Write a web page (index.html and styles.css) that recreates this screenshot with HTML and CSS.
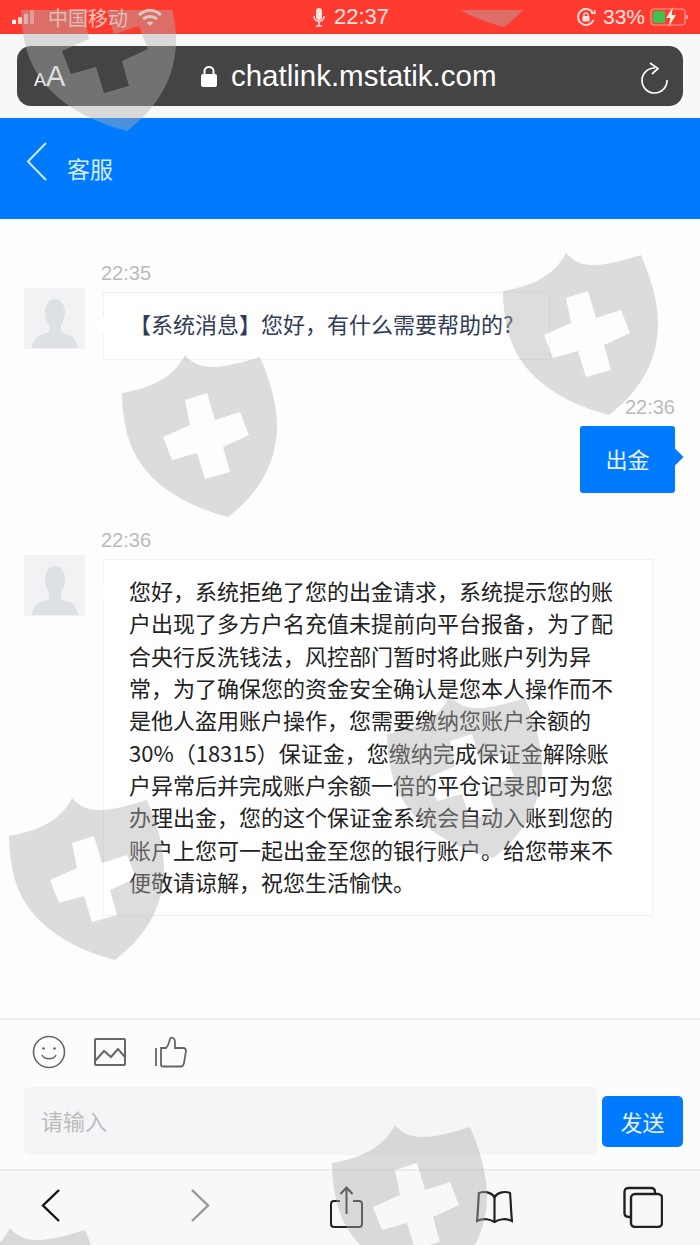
FILE: index.html
```html
<!DOCTYPE html>
<html lang="zh-CN">
<head>
    <meta charset="UTF-8">
    <meta name="viewport" content="width=device-width, initial-scale=1.0">
    <title>客服</title>
    <link rel="stylesheet" href="styles.css">
</head>
<body>
    <div class="phone">
        <!-- iOS status bar -->
        <div class="status-bar">
            <div class="status-left">
                <svg class="signal" width="22" height="14" viewBox="0 0 22 16" preserveAspectRatio="none">
                    <rect x="0" y="11" width="4" height="5" rx="1" fill="#fff"/>
                    <rect x="6" y="8" width="4" height="8" rx="1" fill="#ffc9c4"/>
                    <rect x="12" y="4" width="4" height="12" rx="1" fill="#ffb4ad"/>
                    <rect x="18" y="0" width="4" height="16" rx="1" fill="#ff8f86"/>
                </svg>
                <span class="carrier">中国移动</span>
                <svg class="wifi" width="26" height="19" viewBox="0 0 26 19" fill="none" stroke="#ffd9d5" stroke-width="3">
                    <path d="M2 7C9 1 17 1 24 7"/>
                    <path d="M6 11C10 7.500 16 7.500 20 11"/>
                    <path d="M13 18L9.500 14.500C11.500 13 14.500 13 16.500 14.500Z" fill="#ffd9d5" stroke="none"/>
                </svg>
            </div>
            <div class="status-center">
                <svg width="12" height="19" viewBox="0 0 12 19" fill="none" stroke="#ffe4e1" stroke-width="1.500">
                    <rect x="3" y="0" width="6" height="12" rx="3" fill="#ffe4e1" stroke="none"/>
                    <path d="M1 8C1 15 11 15 11 8M6 14V18M3 18H9"/>
                </svg>
                <span class="clock">22:37</span>
            </div>
            <div class="status-right">
                <svg width="20" height="20" viewBox="0 0 20 20" fill="none" stroke="#ffe4e1" stroke-width="1.800">
                    <path d="M17 6A8 8 0 1 0 17.500 13"/>
                    <path d="M15 6L19 6.500L18.500 3" stroke-width="1.400"/>
                    <rect x="6.500" y="9" width="7" height="5.500" rx="1" fill="#ffe4e1" stroke="none"/>
                    <path d="M8 9.500V7.500C8 5.500 12 5.500 12 7.500V9.500" stroke-width="1.300"/>
                </svg>
                <span class="percent">33%</span>
                <svg width="40" height="20" viewBox="0 0 40 20" fill="none">
                    <rect x="1" y="2" width="34" height="16" rx="3.500" stroke="#ff9d95" stroke-width="1.200"/>
                    <rect x="3" y="4" width="12" height="12" rx="1.500" fill="#3cc24f"/>
                    <path d="M37 8V12" stroke="#ff9d95" stroke-width="2"/>
                    <path d="M23 0L16 11H20.500L18.500 20L26 8H21.500Z" fill="#fff3d9"/>
                </svg>
            </div>
        </div>

        <!-- Safari address bar -->
        <div class="address-wrap">
            <div class="address-bar">
                <span class="text-size"><small>A</small>A</span>
                <div class="url">
                    <svg width="16" height="22" viewBox="0 0 16 22" fill="none">
                        <rect x="0" y="9" width="16" height="13" rx="2" fill="#fff"/>
                        <path d="M3.500 10V6C3.500 0.500 12.500 0.500 12.500 6V10" stroke="#fff" stroke-width="2"/>
                    </svg>
                    <span>chatlink.mstatik.com</span>
                </div>
                <svg class="reload" width="28" height="34" viewBox="0 0 28 34" fill="none" stroke="#fff" stroke-width="1.700">
                    <path d="M14 7A12.500 12.500 0 1 0 26 19"/>
                    <path d="M9 2L17 7.500L11 13"/>
                </svg>
            </div>
        </div>

        <!-- Page header -->
        <header class="chat-header">
            <svg width="22" height="39" viewBox="0 0 22 39" fill="none" stroke="#cfe8ff" stroke-width="2">
                <path d="M20 1L2 19.500L20 38"/>
            </svg>
            <span class="chat-title">客服</span>
        </header>

        <!-- Messages -->
        <main class="chat-list">
            <div class="msg">
                <div class="msg-time">22:35</div>
                <div class="msg-row">
                    <svg class="avatar" viewBox="0 0 61 61">
                        <use href="#avatarShape"/>
                    </svg>
                    <div class="bubble bubble-system">【系统消息】您好，有什么需要帮助的?</div>
                </div>
            </div>

            <div class="msg msg-own">
                <div class="msg-time">22:36</div>
                <div class="bubble bubble-own">出金</div>
            </div>

            <div class="msg">
                <div class="msg-time">22:36</div>
                <div class="msg-row">
                    <svg class="avatar" viewBox="0 0 61 61">
                        <use href="#avatarShape"/>
                    </svg>
                    <div class="bubble bubble-long">您好，系统拒绝了您的出金请求，系统提示您的账户出现了多方户名充值未提前向平台报备，为了配合央行反洗钱法，风控部门暂时将此账户列为异常，为了确保您的资金安全确认是您本人操作而不是他人盗用账户操作，您需要缴纳您账户余额的30%（18315）保证金，您缴纳完成保证金解除账户异常后并完成账户余额一倍的平仓记录即可为您办理出金，您的这个保证金系统会自动入账到您的账户上您可一起出金至您的银行账户。给您带来不便敬请谅解，祝您生活愉快。</div>
                </div>
            </div>
        </main>

        <!-- Composer -->
        <div class="composer">
            <div class="tools">
                <svg width="34" height="34" viewBox="0 0 34 34" fill="none" stroke="#666" stroke-width="1.600">
                    <circle cx="17" cy="17" r="15.500"/>
                    <circle cx="11.500" cy="13.500" r="1.300" fill="#666" stroke="none"/>
                    <circle cx="22.500" cy="13.500" r="1.300" fill="#666" stroke="none"/>
                    <path d="M10 20C12.500 25 21.500 25 24 20"/>
                </svg>
                <svg width="34" height="30" viewBox="0 0 34 30" fill="none" stroke="#666" stroke-width="2">
                    <rect x="2" y="2" width="30" height="26" rx="1"/>
                    <path d="M2 24L11 14L18 20L25 12L32 20"/>
                </svg>
                <svg width="34" height="32" viewBox="0 0 34 32" fill="none" stroke="#666" stroke-width="1.800">
                    <path d="M2 12V30"/>
                    <path d="M7 12V29C7 30 8 30.500 9 30.500H27C29 30.500 29.500 29 30 27L32 15C32 13 31 12 29 12H21V6C21 2 18 1 16.500 2C15 4 16 8 12 12Z"/>
                </svg>
            </div>
            <div class="input-row">
                <div class="input-box">请输入</div>
                <button class="send-btn">发送</button>
            </div>
        </div>

        <!-- Safari toolbar -->
        <nav class="toolbar">
            <svg width="37" height="42" viewBox="0 0 37 42" fill="none" stroke="#111" stroke-width="2.400">
                <path d="M26 4L10 19.500L26 35"/>
            </svg>
            <svg width="37" height="42" viewBox="0 0 37 42" fill="none" stroke="#999" stroke-width="2.400">
                <path d="M11 4L27 19.500L11 35"/>
            </svg>
            <svg width="37" height="42" viewBox="0 0 37 42" fill="none" stroke="#222" stroke-width="2">
                <path d="M12 15H6C4.500 15 3 16 3 18V38C3 40 4.500 41 6 41H31C32.500 41 34 40 34 38V18C34 16 32.500 15 31 15H25"/>
                <path d="M18.500 28V2M12.500 8L18.500 1.500L24.500 8"/>
            </svg>
            <svg width="37" height="42" viewBox="0 0 37 42" fill="none" stroke="#222" stroke-width="2.200">
                <path d="M18.500 11C15 6 8 5 3 7C2 17 2 27 1 35C7 32 14 33 18.500 36C23 33 30 32 36 35C35 27 35 17 34 7C29 5 22 6 18.500 11Z"/>
                <path d="M18.500 11V36"/>
            </svg>
            <svg width="40" height="42" viewBox="0 0 40 42" fill="none" stroke="#222" stroke-width="2.400">
                <path d="M32 7V6C32 3 30.500 2 28 2H6C3 2 1.500 3 1.500 6V27C1.500 30 3 31 6 31H8"/>
                <rect x="8" y="8" width="31" height="33" rx="4"/>
            </svg>
        </nav>

        <!-- Watermark shields lying over the whole page, holes show what is below -->
        <svg class="watermark" width="700" height="1235" viewBox="0 10 700 1235">
            <defs>
                <path id="shield" fill-rule="evenodd" d="M0 38C30 33 52 22 63 0C72 10 80 12 91 12C105 12 125 6 138 2C148 25 155 50 155 70C155 110 135 140 106 162C60 150 20 125 7 85C2 70 0 50 0 38ZM63 45L85 38L93 65L118 57L127 80L101 92L108 117L83 124L75 98L50 105L41 82L68 70Z"/>
                <g id="avatarShape">
                    <rect width="61" height="61" fill="#f1f2f3"/>
                    <ellipse cx="31" cy="25" rx="10" ry="14" fill="#dde1e5"/>
                    <path d="M25 36H37V44C44 47 52 47 54 60H8C10 47 18 47 25 44Z" fill="#dde1e5"/>
                </g>
            </defs>
            <use href="#shield" x="21" y="-31"/>
            <use href="#shield" x="398" y="-135"/>
            <use href="#shield" x="503" y="253"/>
            <use href="#shield" x="122" y="355"/>
            <use href="#shield" x="387" y="696"/>
            <use href="#shield" x="9" y="798"/>
            <use href="#shield" x="332" y="1125"/>
            <use href="#shield" x="-53" y="1228"/>
        </svg>
    </div>
</body>
</html>
```

FILE: styles.css
```css
body {
    margin: 0;
    font-family: "Noto Sans CJK SC", "Liberation Sans", sans-serif;
}

.phone {
    position: relative;
    display: flex;
    flex-direction: column;
    width: 700px;
    height: 1245px;
    overflow: hidden;
    background-color: #fdfdfd;
}

/* status bar */
.status-bar {
    display: grid;
    grid-template-columns: 1fr auto 1fr;
    align-items: center;
    height: 34px;
    padding: 0 10px 0 12px;
    background-color: #ff3b30;
    color: #ffe4e1;
}

.status-left,
.status-center,
.status-right {
    display: flex;
    align-items: center;
}

.status-left {
    gap: 14px;
}

.carrier {
    font-size: 20px;
    color: #ffc4bf;
}

.wifi {
    margin-left: -5px;
}

.status-center {
    gap: 9px;
}

.clock {
    font-family: "Liberation Sans", sans-serif;
    font-size: 22px;
}

.status-right {
    justify-content: flex-end;
    gap: 7px;
}

.percent {
    font-family: "Liberation Sans", sans-serif;
    font-size: 21px;
    margin-right: -2px;
}

/* address bar */
.address-wrap {
    height: 60px;
    padding: 12px 17px;
    background-color: #f8f8f8;
}

.address-bar {
    display: flex;
    align-items: center;
    justify-content: space-between;
    height: 60px;
    padding: 0 14px 0 17px;
    border-radius: 14px;
    background-color: #444;
    color: #fff;
    font-family: "Liberation Sans", sans-serif;
}

.text-size {
    font-size: 29px;
}

.text-size small {
    font-size: 18px;
}

.url {
    display: flex;
    align-items: center;
    gap: 14px;
    font-size: 29.500px;
    margin-left: -9px;
}

.reload {
    margin-top: 3px;
}

/* header */
.chat-header {
    display: flex;
    align-items: flex-start;
    gap: 19px;
    height: 77px;
    padding: 24px 0 0 26px;
    background-color: #007aff;
}

.chat-title {
    margin-top: 11px;
    font-size: 23px;
    line-height: 30px;
    color: #d5ecff;
}

/* messages */
.chat-list {
    flex: 1;
    display: flex;
    flex-direction: column;
    gap: 37px;
    padding-top: 44px;
    box-sizing: border-box;
    min-height: 0;
}

.msg {
    padding: 0 24px;
}

.msg-own {
    display: flex;
    flex-direction: column;
    align-items: flex-end;
    padding-right: 25px;
}

.msg-time {
    font-family: "Liberation Sans", sans-serif;
    font-size: 20px;
    line-height: 20px;
    color: #bbb;
    padding-left: 77px;
}

.msg-own .msg-time {
    padding: 0;
}

.msg-row {
    display: flex;
    align-items: flex-start;
    gap: 18px;
    margin-top: 5px;
}

.avatar {
    flex: none;
    width: 61px;
    height: 61px;
}

.bubble {
    position: relative;
    box-sizing: border-box;
    font-size: 22px;
}

.bubble-system,
.bubble-long {
    margin-top: 4px;
    border: 1px solid #f1f1f1;
    background-color: #fff;
}

.bubble-system::before,
.bubble-long::before,
.bubble-own::after {
    content: "";
    position: absolute;
    width: 12px;
    height: 12px;
    transform: rotate(45deg);
}

.bubble-system::before,
.bubble-long::before {
    left: -6px;
    top: 26px;
    background-color: #fff;
}

.bubble-system {
    width: 447px;
    height: 68px;
    padding: 0 0 0 25px;
    line-height: 60px;
    color: #2f3b57;
}

.bubble-long {
    width: 550px;
    padding: 14px 24px 18px 25px;
    line-height: 32.350px;
    color: #222;
}

.bubble-own {
    margin-top: 9px;
    width: 95px;
    height: 67px;
    border-radius: 3px;
    background-color: #007aff;
    color: #e8f4ff;
    line-height: 64px;
    text-align: center;
}

.bubble-own::after {
    right: -6px;
    top: 25px;
    background-color: #007aff;
}

/* composer */
.composer {
    height: 153px;
    flex: none;
    box-sizing: border-box;
    border-top: 2px solid #efefef;
    border-bottom: 2px solid #ececec;
    padding: 15px 17px 0 24px;
    background-color: #fcfcfc;
}

.tools {
    display: flex;
    align-items: center;
    gap: 27px;
    height: 33px;
    padding-left: 8px;
}

.input-row {
    display: flex;
    align-items: center;
    gap: 5px;
    margin-top: 19px;
}

.input-box {
    flex: 1;
    height: 68px;
    padding-left: 17px;
    border-radius: 6px;
    background-color: #f5f5f8;
    color: #bbb;
    font-size: 22px;
    line-height: 66px;
}

.send-btn {
    width: 81px;
    height: 51px;
    padding: 0;
    border: none;
    border-radius: 5px;
    background-color: #007aff;
    color: #e8f4ff;
    font-family: inherit;
    font-size: 22px;
}

/* browser toolbar */
.toolbar {
    display: flex;
    align-items: flex-start;
    justify-content: space-between;
    height: 74px;
    flex: none;
    padding: 15px 37px 0 33px;
    box-sizing: border-box;
    background-color: #f8f8f8;
}

/* watermark */
.watermark {
    position: absolute;
    left: 0;
    top: 10px;
    fill: rgba(176, 176, 176, 0.43);
    pointer-events: none;
}
```
